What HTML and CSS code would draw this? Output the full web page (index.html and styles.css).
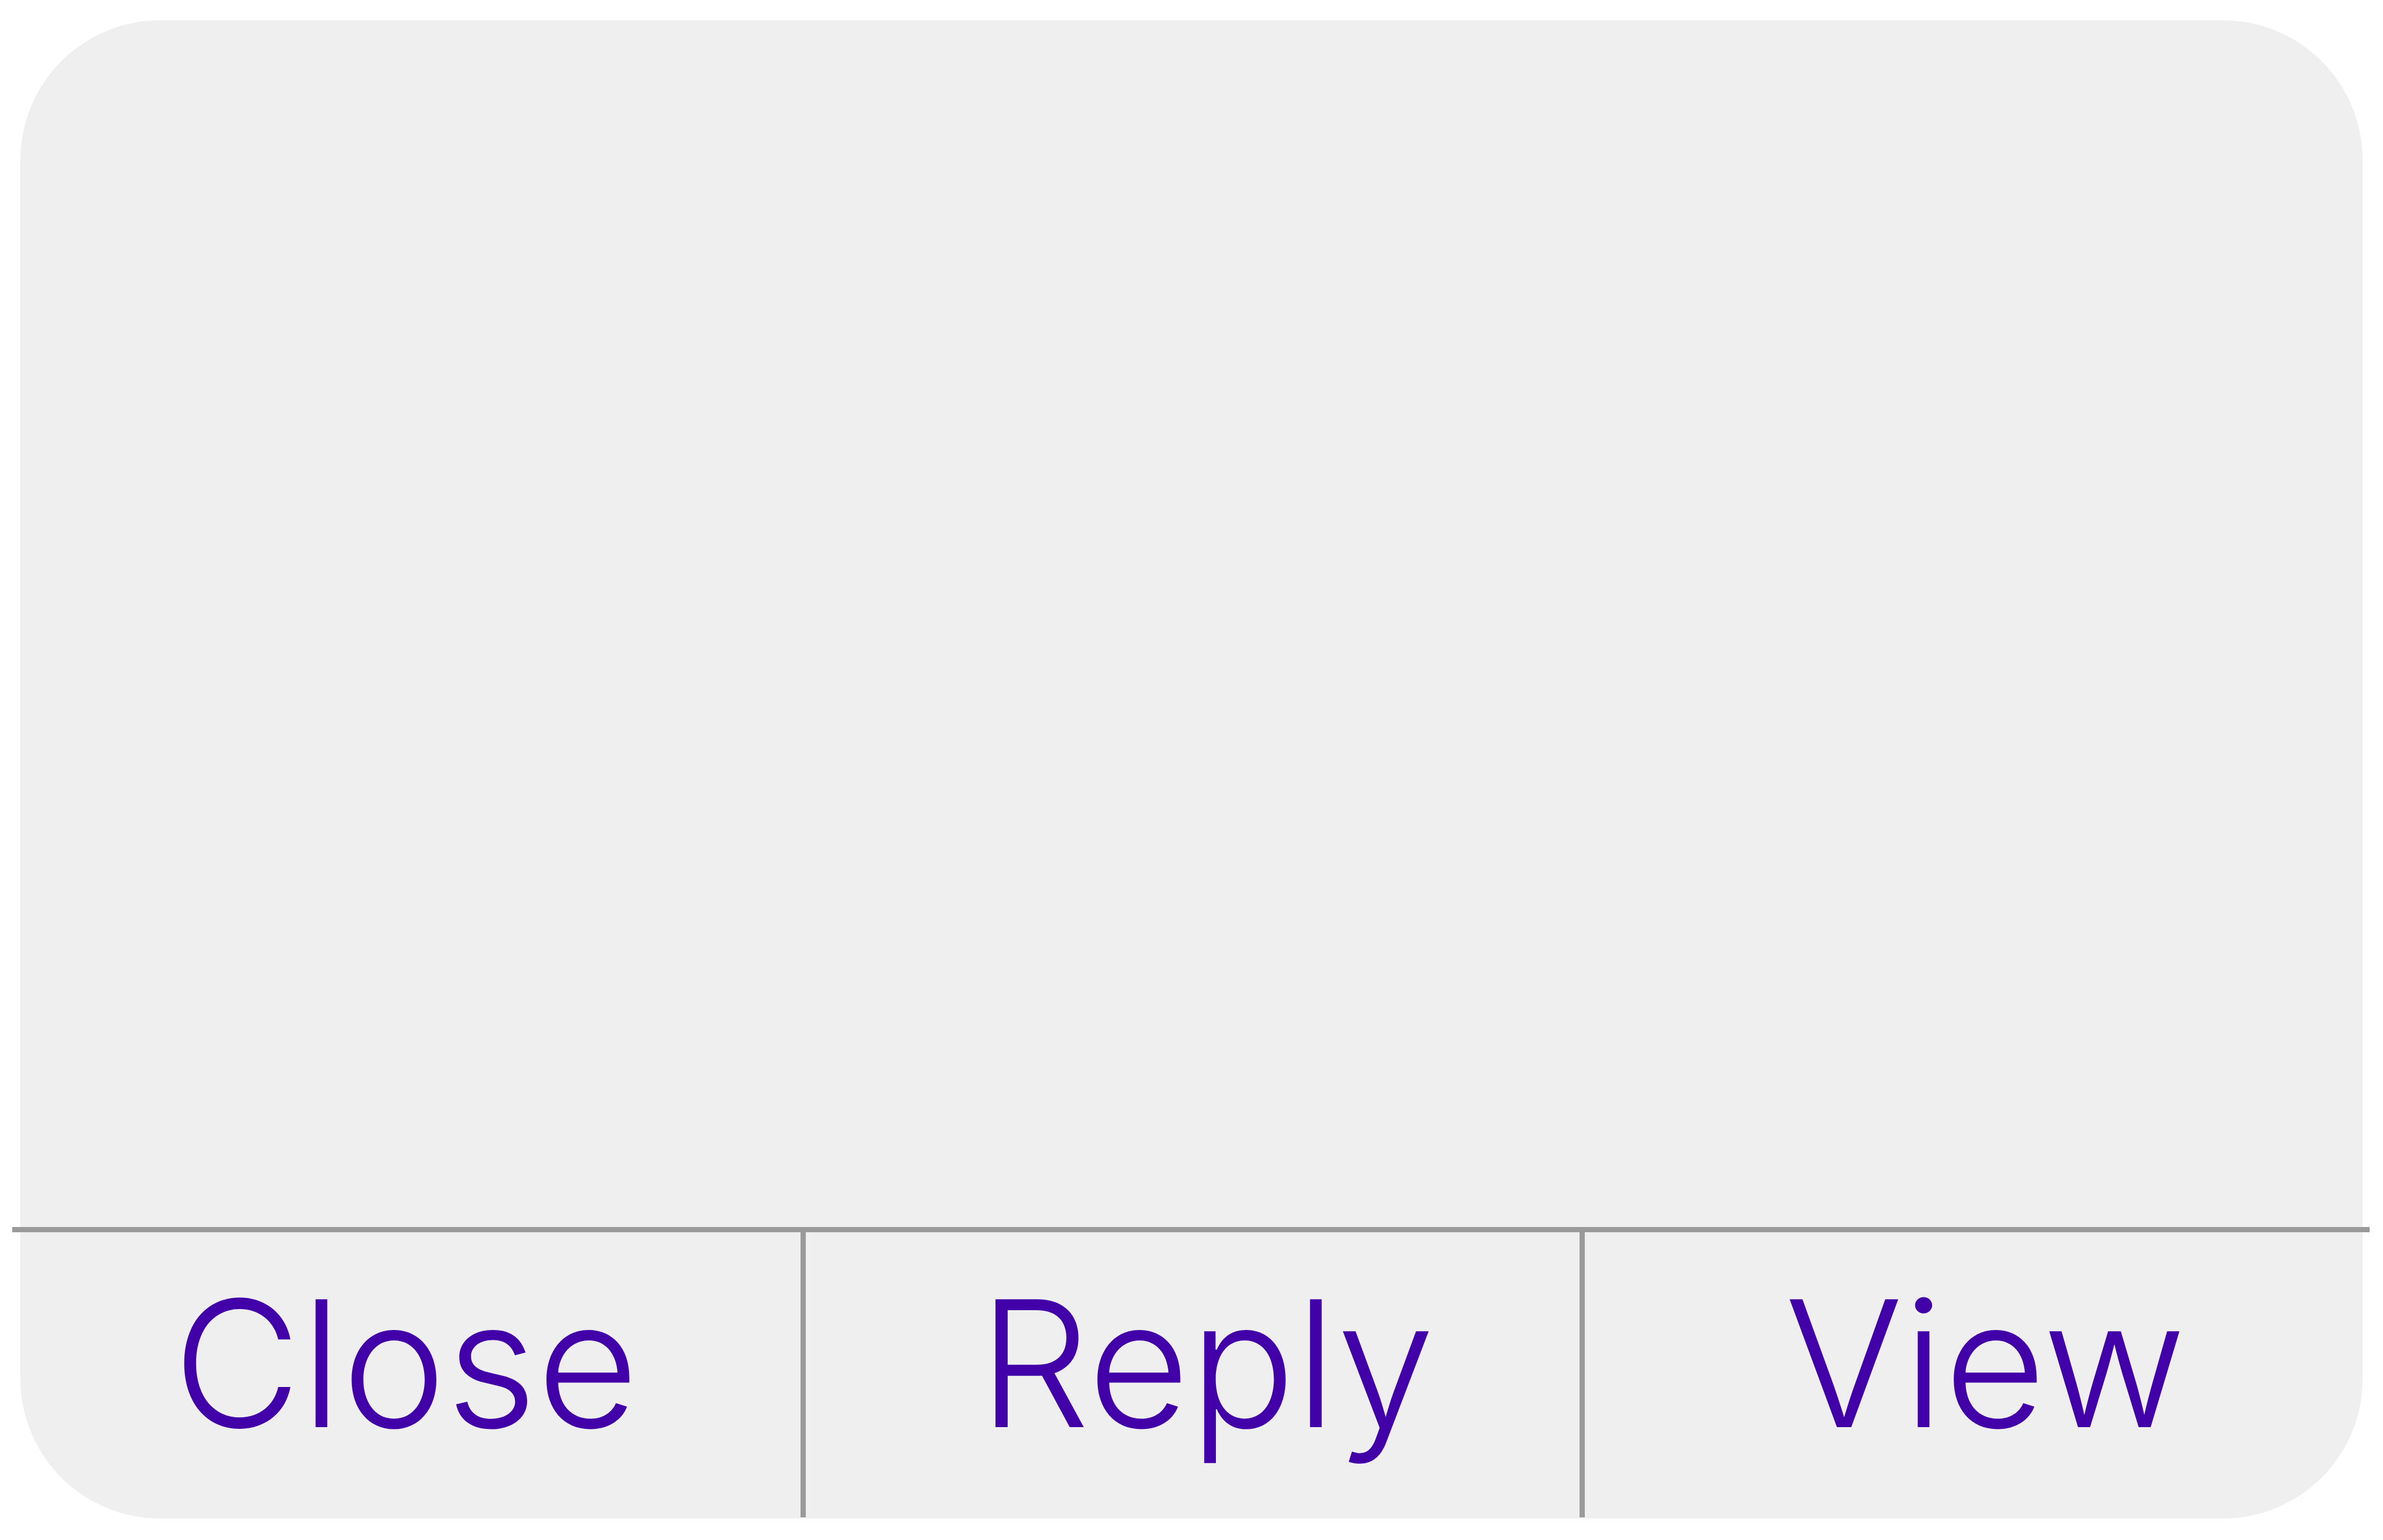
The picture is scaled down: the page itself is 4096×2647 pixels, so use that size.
FILE: index.html
```html
<!DOCTYPE html>
<html lang="en">
<head>
<meta charset="utf-8">
<title>Notification</title>
<link rel="stylesheet" href="styles.css">
</head>
<body>
<main class="card">
  <section class="content" aria-label="Message"></section>
  <footer class="actions">
    <button class="action close" type="button">Close</button>
    <button class="action reply" type="button">Reply</button>
    <button class="action view" type="button">View</button>
  </footer>
</main>
</body>
</html>
```
FILE: styles.css
```css
* {
  box-sizing: border-box;
}

body {
  margin: 0;
  min-height: 100vh;
  padding: 35px 35px 37px;
  display: flex;
  background: #fff;
}

.card {
  flex: 1;
  display: flex;
  flex-direction: column;
  border-radius: 240px;
  background: #efefef;
}

.content {
  flex: 1;
}

/* The rule above the buttons runs a little past both sides of the card. */
.actions {
  display: grid;
  grid-template-columns: 1350fr 1339fr 1337fr;
  margin: 0 -12px 0 -14px;
  padding: 0 12px 2px 14px;
  border-top: 9px solid #9a9a9a;
}

.action {
  height: 490px;
  padding: 0 0 40px;
  border: 0;
  border-right: 9px solid #9a9a9a;
  background: none;
  color: #4200a9;
  font-family: Inter, "Liberation Sans", sans-serif;
  font-size: 302px;
  font-weight: 300;
  line-height: 360px;
}

.close {
  padding-right: 16px;
}

.reply {
  padding-left: 48px;
}

.view {
  padding-left: 40px;
  border-right: 0;
}
```
